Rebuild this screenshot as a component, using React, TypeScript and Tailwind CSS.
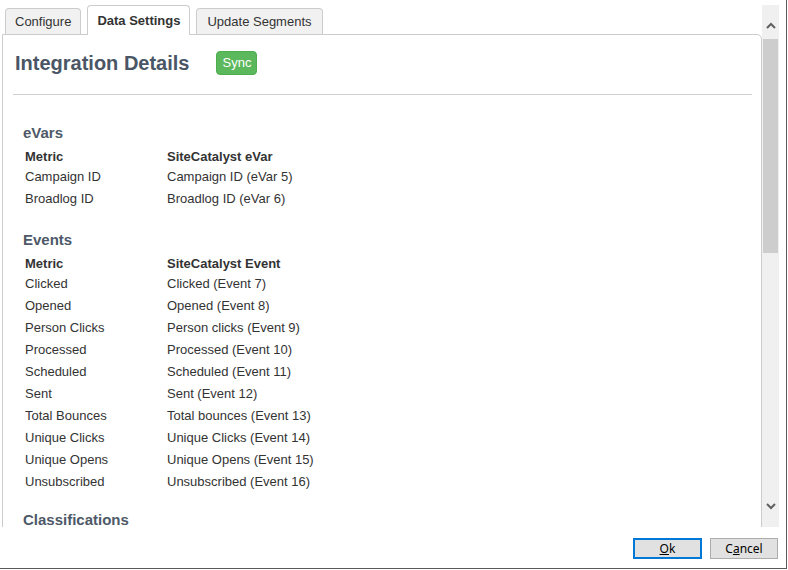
const evars = [
  ['Campaign ID', 'Campaign ID (eVar 5)'],
  ['Broadlog ID', 'Broadlog ID (eVar 6)'],
];

const events = [
  ['Clicked', 'Clicked (Event 7)'],
  ['Opened', 'Opened (Event 8)'],
  ['Person Clicks', 'Person clicks (Event 9)'],
  ['Processed', 'Processed (Event 10)'],
  ['Scheduled', 'Scheduled (Event 11)'],
  ['Sent', 'Sent (Event 12)'],
  ['Total Bounces', 'Total bounces (Event 13)'],
  ['Unique Clicks', 'Unique Clicks (Event 14)'],
  ['Unique Opens', 'Unique Opens (Event 15)'],
  ['Unsubscribed', 'Unsubscribed (Event 16)'],
];

function MappingTable({ header, rows }: { header: string; rows: string[][] }) {
  return (
    <div className="pl-[12px] text-[13px] text-[#333333]">
      <div className="flex h-[19px] items-center font-bold">
        <div className="w-[142px]">Metric</div>
        <div>{header}</div>
      </div>
      {rows.map(([metric, target]) => (
        <div key={metric} className="flex h-[22px] items-center">
          <div className="w-[142px]">{metric}</div>
          <div>{target}</div>
        </div>
      ))}
    </div>
  );
}

function SectionTitle({ children, className = '' }: { children: string; className?: string }) {
  return (
    <div className={`pl-[10px] text-[15px] font-bold leading-[20px] text-[#4d5968] ${className}`}>
      {children}
    </div>
  );
}

function Chevron({ up }: { up?: boolean }) {
  return (
    <svg width="10" height="7" viewBox="0 0 10 7">
      <polyline
        points={up ? '1,6 5,2 9,6' : '1,1 5,5 9,1'}
        fill="none"
        stroke="#606060"
        strokeWidth="2"
      />
    </svg>
  );
}

export default function App() {
  return (
    <div className="h-[570px] w-[788px] bg-white" style={{ fontFamily: '"Liberation Sans", Arial, sans-serif' }}>
      <div className="flex h-[569px] w-[787px] flex-col border-b border-r border-[#5a5a5a]">
        {/* dialog body */}
        <div className="flex h-[527px] overflow-hidden">
          <div className="w-[762px] pl-[2px]">
            {/* tabs */}
            <div className="relative z-10 flex items-end gap-[6px] pl-[3px] pt-[5px] text-[13px] text-[#333333]">
              <div className="mb-px flex h-[26px] items-center rounded-t-[4px] border border-b-0 border-[#cccccc] bg-[#f1f1f1] px-[9px]">
                Configure
              </div>
              <div className="flex h-[30px] items-center rounded-t-[4px] border border-b-0 border-[#cccccc] bg-white px-[9px] font-bold">
                Data Settings
              </div>
              <div className="mb-px flex h-[26px] items-center rounded-t-[4px] border border-b-0 border-[#cccccc] bg-[#f1f1f1] px-[10px]">
                Update Segments
              </div>
            </div>

            {/* panel */}
            <div className="-mt-px h-[600px] rounded-tr-[5px] border border-[#cccccc] pl-[10px] pr-[9px] pt-[16px]">
              <div className="flex h-[24px] items-center gap-[27px] pl-[2px]">
                <div className="text-[20px] font-bold text-[#4a5666]">Integration Details</div>
                <button className="flex h-[24px] items-center rounded-[4px] border border-[#4cae4c] bg-[#5cb85c] px-[5px] text-[13px] text-white">
                  Sync
                </button>
              </div>
              <div className="mt-[19px] h-px bg-[#cfcfcf]" />

              <SectionTitle className="mt-[28px]">eVars</SectionTitle>
              <div className="mt-[4px]">
                <MappingTable header="SiteCatalyst eVar" rows={evars} />
              </div>

              <SectionTitle className="mt-[20px]">Events</SectionTitle>
              <div className="mt-[4px]">
                <MappingTable header="SiteCatalyst Event" rows={events} />
              </div>

              <SectionTitle className="mt-[17px]">Classifications</SectionTitle>
            </div>
          </div>

          {/* scrollbar */}
          <div className="mt-[5px] flex h-[522px] w-[17px] flex-col bg-[#f0f0f0]">
            <div className="flex h-[34px] items-center justify-center pt-[6px]">
              <Chevron up />
            </div>
            <div className="mx-px h-[214px] bg-[#cdcdcd]" />
            <div className="flex-1" />
            <div className="flex h-[34px] items-center justify-center pb-[8px]">
              <Chevron />
            </div>
          </div>
        </div>

        {/* footer buttons */}
        <div
          className="flex flex-1 items-start justify-end gap-[8px] pr-[8px] pt-[11px] text-[12px] text-black"
          style={{ fontFamily: '"Noto Sans", "Open Sans", sans-serif' }}
        >
          <button className="flex h-[21px] w-[69px] items-center justify-center border-2 border-[#0078d7] bg-[#e1e1e1]">
            <span>
              <span className="underline">O</span>k
            </span>
          </button>
          <button className="flex h-[21px] w-[68px] items-center justify-center border border-[#adadad] bg-[#e1e1e1]">
            <span>
              C<span className="underline">a</span>ncel
            </span>
          </button>
        </div>
      </div>
    </div>
  );
}
